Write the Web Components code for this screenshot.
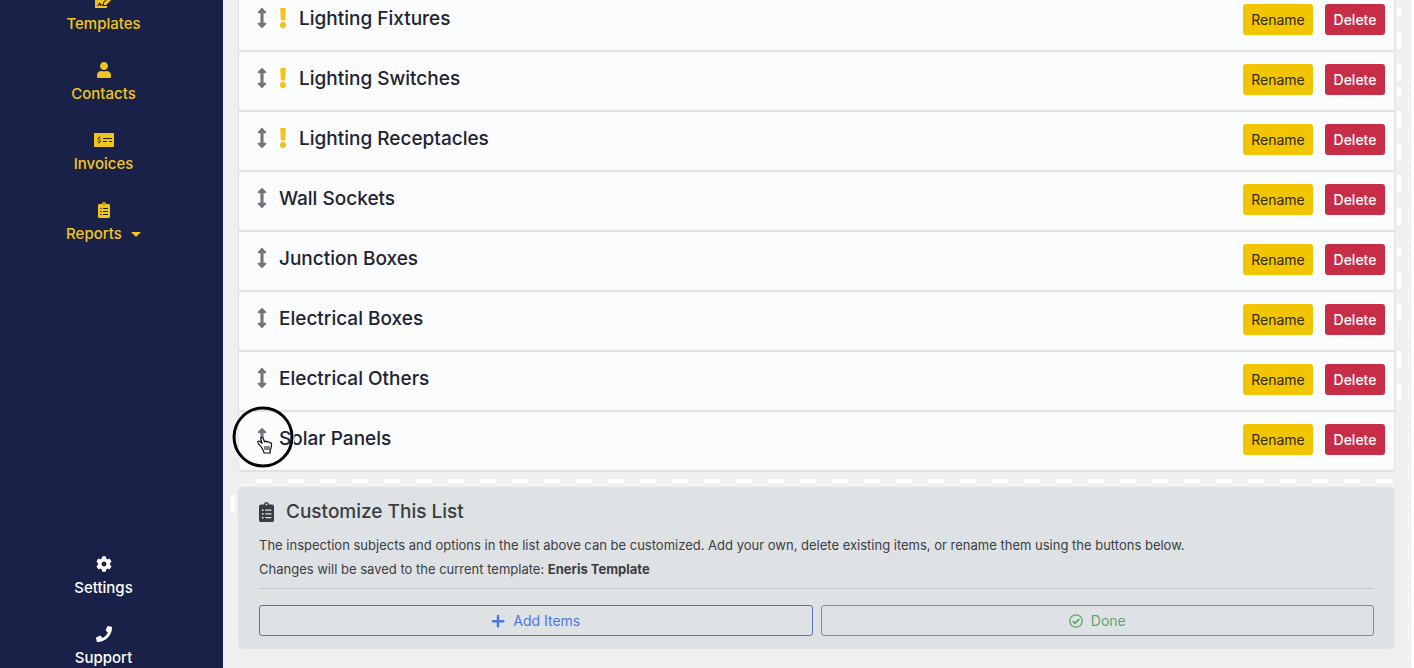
<!DOCTYPE html>
<html lang="en">
<head>
<meta charset="utf-8">
<title>Template items</title>
<style>
  html, body { margin: 0; height: 100%; overflow: hidden; }
  body { font-family: Inter, "Liberation Sans", sans-serif; background: #efefef; color: #212330; }
</style>
</head>
<body>
<app-shell></app-shell>
<script>
const path = (box, d) => `<svg viewBox="0 0 ${box} 512" fill="currentColor" aria-hidden="true"><path d="${d}"/></svg>`;
const ICONS = {
  sign: path(576, 'M218.17 424.14c-2.95-5.92-8.09-6.52-10.17-6.52s-7.22.59-10.02 6.19l-7.67 15.34c-6.37 12.78-25.03 11.37-29.48-2.09L144 386.59l-10.61 31.88c-5.89 17.66-22.38 29.53-41 29.53H80c-8.84 0-16-7.16-16-16s7.16-16 16-16h12.39c4.83 0 9.11-3.08 10.64-7.66l18.19-54.64c3.3-9.81 12.44-16.41 22.78-16.41s19.48 6.59 22.77 16.41l13.88 41.64c19.75-16.19 54.06-9.7 66 14.16 1.89 3.78 5.49 5.95 9.36 6.26v-82.12l128-127.09V160H248c-13.2 0-24-10.8-24-24V0H24C10.7 0 0 10.7 0 24v464c0 13.3 10.7 24 24 24h336c13.3 0 24-10.7 24-24v-40l-128-.11c-16.12-.31-30.58-9.28-37.83-23.75zM384 121.9c0-6.3-2.5-12.4-7-16.9L279.1 7c-4.5-4.5-10.6-7-17-7H256v128h128v-6.1zm-96 225.06V416h68.99l161.68-162.78-67.88-67.88L288 346.96zm280.54-179.63l-31.87-31.87c-9.94-9.94-26.07-9.94-36.01 0l-27.25 27.25 67.88 67.88 27.25-27.25c9.95-9.94 9.95-26.07 0-36.01z'),
  user: path(448, 'M224 256c70.7 0 128-57.3 128-128S294.7 0 224 0 96 57.3 96 128s57.3 128 128 128zm89.6 32h-16.7c-22.2 10.2-46.9 16-72.9 16s-50.6-5.8-72.9-16h-16.7C60.2 288 0 348.2 0 422.4V464c0 26.5 21.5 48 48 48h352c26.5 0 48-21.5 48-48v-41.6c0-74.2-60.2-134.4-134.4-134.4z'),
  check: `<svg viewBox="0 0 20 16" aria-hidden="true"><rect y="1" width="20" height="14" rx="1" fill="currentColor"/><g fill="none" stroke="#192148" stroke-width="1"><path d="M9 6.5h9M9 9.5h4M15 9.5h3"/><path d="M6.5 6.3C6 5.5 3.8 5.5 3.8 6.8S6.6 7.9 6.6 9.2 4 10.4 3.5 9.5M5.2 4.5v1M5.2 10.5v1" stroke-width=".9"/></g></svg>`,
  list: path(384, 'M336 64h-80c0-35.3-28.7-64-64-64s-64 28.7-64 64H48C21.5 64 0 85.5 0 112v352c0 26.5 21.5 48 48 48h288c26.5 0 48-21.5 48-48V112c0-26.5-21.5-48-48-48zM96 424c-13.3 0-24-10.7-24-24s10.7-24 24-24 24 10.7 24 24-10.7 24-24 24zm0-96c-13.3 0-24-10.7-24-24s10.7-24 24-24 24 10.7 24 24-10.7 24-24 24zm0-96c-13.3 0-24-10.7-24-24s10.7-24 24-24 24 10.7 24 24-10.7 24-24 24zm96-192c13.3 0 24 10.7 24 24s-10.7 24-24 24-24-10.7-24-24 10.7-24 24-24zm128 368c0 4.4-3.6 8-8 8H168c-4.4 0-8-3.6-8-8v-16c0-4.4 3.6-8 8-8h144c4.4 0 8 3.6 8 8v16zm0-96c0 4.4-3.6 8-8 8H168c-4.4 0-8-3.6-8-8v-16c0-4.4 3.6-8 8-8h144c4.4 0 8 3.6 8 8v16zm0-96c0 4.4-3.6 8-8 8H168c-4.4 0-8-3.6-8-8v-16c0-4.4 3.6-8 8-8h144c4.4 0 8 3.6 8 8v16z'),
  cog: path(512, 'M487.4 315.7l-42.6-24.6c4.3-23.2 4.3-47 0-70.2l42.6-24.6c4.9-2.8 7.1-8.6 5.5-14-11.1-35.6-30-67.8-54.7-94.6-3.8-4.1-10-5.1-14.8-2.3L380.8 110c-17.9-15.4-38.5-27.3-60.8-35.1V25.8c0-5.6-3.9-10.5-9.4-11.7-36.7-8.2-74.3-7.8-109.2 0-5.5 1.2-9.4 6.1-9.4 11.7V75c-22.2 7.9-42.8 19.8-60.8 35.1L88.7 85.5c-4.9-2.8-11-1.9-14.8 2.3-24.7 26.7-43.6 58.9-54.7 94.6-1.7 5.4.6 11.2 5.5 14L67.3 221c-4.3 23.2-4.3 47 0 70.2l-42.6 24.6c-4.9 2.8-7.1 8.6-5.5 14 11.1 35.6 30 67.8 54.7 94.6 3.8 4.1 10 5.1 14.8 2.3l42.6-24.6c17.9 15.4 38.5 27.3 60.8 35.1v49.2c0 5.6 3.9 10.5 9.4 11.7 36.7 8.2 74.3 7.8 109.2 0 5.5-1.2 9.4-6.1 9.4-11.7v-49.2c22.2-7.9 42.8-19.8 60.8-35.1l42.6 24.6c4.9 2.8 11 1.9 14.8-2.3 24.7-26.7 43.6-58.9 54.7-94.6 1.5-5.5-.7-11.3-5.6-14.1zM256 336c-44.1 0-80-35.9-80-80s35.9-80 80-80 80 35.9 80 80-35.9 80-80 80z'),
  phone: path(512, 'M493.4 24.6l-104-24c-11.3-2.6-22.9 3.3-27.5 13.9l-48 112c-4.2 9.8-1.4 21.3 6.9 28l60.6 49.6c-36 76.7-98.9 140.5-177.2 177.2l-49.6-60.6c-6.8-8.3-18.2-11.1-28-6.9l-112 48C3.9 366.5-2 378.1.6 389.4l24 104C27.1 504.2 36.7 512 48 512c256.1 0 464-207.5 464-464 0-11.2-7.7-20.9-18.6-23.4z'),
  move: path(256, 'M214.059 377.941H168V134.059h46.059c21.382 0 32.09-25.851 16.971-40.971L144.97 7.029c-9.373-9.373-24.568-9.373-33.941 0L24.971 93.088c-15.119 15.119-4.411 40.971 16.971 40.971H88v243.882H41.941c-21.382 0-32.09 25.851-16.971 40.971l86.059 86.059c9.373 9.373 24.568 9.373 33.941 0l86.059-86.059c15.12-15.119 4.412-40.971-16.97-40.971z'),
  alert: path(192, 'M176 432c0 44.112-35.888 80-80 80s-80-35.888-80-80 35.888-80 80-80 80 35.888 80 80zM25.26 25.199l13.6 272C39.499 309.972 50.041 320 62.83 320h66.34c12.789 0 23.331-10.028 23.97-22.801l13.6-272C167.425 11.49 156.496 0 142.77 0H49.23C35.504 0 24.575 11.49 25.26 25.199z'),
  plus: `<svg viewBox="0 0 14 14" fill="none" stroke="currentColor" stroke-width="2.4" stroke-linecap="round" aria-hidden="true"><path d="M7 2v10.4M2 7.200h10.4"/></svg>`,
  done: `<svg viewBox="0 0 14 14" fill="none" stroke="currentColor" stroke-width="1.3" aria-hidden="true"><circle cx="7" cy="7" r="6.2"/><path d="M3.8 7.2l2.2 2.2 4.3-4.3" stroke-width="1.7"/></svg>`,
};

const define = (name, render) => customElements.define(name, class extends HTMLElement {
  connectedCallback() {
    if (!this.shadowRoot) this.attachShadow({ mode: 'open' }).innerHTML = render(this);
  }
});

define('ui-icon', el => `<style>
  :host { display: inline-flex; flex: none; width: 16px; height: 16px; }
  svg { display: block; width: 100%; height: 100%; }
</style>${ICONS[el.getAttribute('name')]}`);

define('nav-item', el => `<style>
  :host { display: block; }
  a { display: flex; flex-direction: column; align-items: center; gap: 4px; padding: 12px 16px 14px 0;
      color: inherit; text-decoration: none; font-size: 15px; line-height: 24px; font-weight: 500; }
  ui-icon { width: 20px; }
  .text { display: flex; align-items: center; gap: 9px; }
  .caret { border: 5px solid transparent; border-top-color: currentColor; border-bottom: 0; }
</style>
<a href="#"><ui-icon name="${el.getAttribute('icon')}"></ui-icon><span class="text"><slot></slot>${el.hasAttribute('menu') ? '<i class="caret"></i>' : ''}</span></a>`);

define('side-bar', () => `<style>
  :host { display: flex; flex-direction: column; justify-content: space-between; overflow: hidden;
          background: #192148; color: #f1c61c; }
  nav.main { margin-top: -20px; }
  nav.foot { margin-bottom: -16px; color: #fff; }
</style>
<nav class="main" aria-label="Main">
  <nav-item icon="sign">Templates</nav-item>
  <nav-item icon="user">Contacts</nav-item>
  <nav-item icon="check">Invoices</nav-item>
  <nav-item icon="list" menu>Reports</nav-item>
</nav>
<nav class="foot" aria-label="Help">
  <nav-item icon="cog">Settings</nav-item>
  <nav-item icon="phone">Support</nav-item>
</nav>`);

define('solid-button', () => `<style>
  :host { display: block; width: 70px; }
  :host([kind=danger]) { width: 60px; }
  button { display: block; width: 100%; height: 31px; padding: 0; border: 0; border-radius: 3px; font: inherit;
           font-size: 14px; line-height: 31px; background: #f1c500; color: #33290f; }
  :host([kind=danger]) button { background: #c72d46; color: #fff; font-weight: 500; }
</style><button type="button"><slot></slot></button>`);

define('pointer-ring', () => `<style>
  :host { position: absolute; left: 50%; top: 50%; width: 64px; height: 64px; margin: -33px 0 0 -31px; pointer-events: none; }
  svg { display: block; }
</style>
<svg width="64" height="64" viewBox="0 0 64 64" fill="none" aria-hidden="true">
  <circle cx="32" cy="32" r="30" stroke="#fff" stroke-width="3"/>
  <circle cx="32" cy="32" r="29" stroke="#050505" stroke-width="3"/>
  <path d="M31 43l-4-5c-1-1.5.6-2.6 2-1.5l2 1.8-1-4c-.7-2.2 1.6-2.8 2.3-.7l1.2 3.4c.5-1.2 2.2-1 2.5.2.8-.9 2.2-.5 2.4.5 1-.5 2.2.2 2.2 1.5 0 3-.5 4.8-1.6 6.5l.2 2.3h-6z" fill="#fff" stroke="#111" stroke-width="1.2" stroke-linejoin="round"/>
  <path d="M34 41v4M36 41v4M38 41v4" stroke="#111"/>
</svg>`);

define('item-row', el => `<style>
  :host { display: flex; align-items: flex-start; box-sizing: border-box; height: 60px; padding: 12px 9px 0 18px;
          border: 1px solid #dfe2e5; border-width: 0 1px 2px; background: #fbfcfe; }
  :host(:last-of-type) { border-radius: 0 0 4px 4px; }
  .lead { display: flex; align-items: center; flex: 1; gap: 12px; height: 30px; }
  .handle { position: relative; display: flex; margin-bottom: 2px; color: #71757a; }
  .handle ui-icon { width: 10px; height: 20px; }
  .alert { width: 8px; height: 20px; margin-bottom: 2px; color: #f1c31c; }
  h5 { margin: 0; font-size: 19px; line-height: 30px; font-weight: 500; }
  .actions { display: flex; gap: 12px; }
</style>
<div class="lead">
  <span class="handle"><ui-icon name="move"></ui-icon>${el.hasAttribute('held') ? '<pointer-ring></pointer-ring>' : ''}</span>
  ${el.hasAttribute('flagged') ? '<ui-icon class="alert" name="alert"></ui-icon>' : ''}
  <h5><slot></slot></h5>
</div>
<div class="actions"><solid-button>Rename</solid-button><solid-button kind="danger">Delete</solid-button></div>`);

define('dash-strip', () => `<style>
  :host { display: block; height: 15px; }
  svg { display: block; overflow: visible; }
</style>
<svg width="100%" height="15" aria-hidden="true">
  <defs>
    <pattern id="wide" x="17" width="32" height="15" patternUnits="userSpaceOnUse"><rect y="7" width="18" height="4" fill="#fcfdfe"/></pattern>
    <pattern id="thin" x="2" width="32" height="15" patternUnits="userSpaceOnUse"><rect y="12" width="16" height="1" fill="#fcfdfe"/></pattern>
  </defs>
  <rect x="17" width="100%" height="15" fill="url(#wide)" style="clip-path: inset(0 17px 0 0)"/>
  <rect width="100%" height="15" fill="url(#thin)"/>
  <rect x="-7" y="23" width="4" height="18" fill="#fcfdfe"/>
</svg>`);

define('dash-gutter', () => {
  const wide = [[7,10],[31,18],[63,18],[87,10],[111,18],[143,18],[175,18],[207,18],[247,10],[271,18],[303,18],[351,18],[383,18]];
  const thin = [[80,4],[88,4],[96,16],[128,16],[160,4],[168,4],[176,16],[208,16],[240,4],[248,4],[256,16],[288,16],[320,20],[344,4],[352,16],[384,16],[416,4],[424,4],[432,16],[464,16],[496,4],[504,4],[512,16],[544,16],[576,4],[584,4],[592,16],[624,16],[656,4]];
  return `<style>
    :host { display: block; width: 16px; border-right: 3px solid #fcfdfe; overflow: hidden; }
    svg { display: block; }
  </style>
  <svg width="16" height="100%" fill="#fcfdfe" aria-hidden="true">
    ${wide.map(([y, h]) => `<rect x="2" y="${y}" width="4" height="${h}"/>`).join('')}
    ${thin.map(([y, h]) => `<rect x="13" y="${y}" width="1" height="${h}"/>`).join('')}
  </svg>`;
});

define('outline-button', el => `<style>
  :host { display: block; flex: 1; }
  button { display: flex; align-items: center; justify-content: center; gap: 8px; width: 100%; height: 31px; padding: 0;
           border: 1px solid #5673b8; border-radius: 3px; background: none; font: inherit; font-size: 14px; line-height: 20px; color: #4b76e0; }
  :host([kind=success]) button { border-color: #63a072; color: #5fa56b; }
  ui-icon { width: 14px; height: 14px; }
</style><button type="button"><ui-icon name="${el.getAttribute('icon')}"></ui-icon><span><slot></slot></span></button>`);

define('customize-panel', () => `<style>
  :host { display: block; padding: 12px 21px 13px; border-radius: 5px; background: #dfe2e5; color: #3a3d40; }
  h5 { display: flex; align-items: center; gap: 12px; margin: 0 0 8px; font-size: 19px; line-height: 26px; font-weight: 500; }
  h5 ui-icon { width: 15px; height: 20px; }
  p { margin: 0; font-size: 13px; line-height: 24px; }
  hr { height: 1px; margin: 7px 0 16px; border: 0; background: #c5c9cd; }
  .actions { display: flex; gap: 8px; }
</style>
<h5><ui-icon name="list"></ui-icon>Customize This List</h5>
<p>The inspection subjects and options in the list above can be customized. Add your own, delete existing items, or rename them using the buttons below.</p>
<p>Changes will be saved to the current template: <b>Eneris Template</b></p>
<hr>
<div class="actions">
  <outline-button icon="plus">Add Items</outline-button>
  <outline-button icon="done" kind="success">Done</outline-button>
</div>`);

define('app-shell', () => `<style>
  :host { display: grid; grid-template-columns: 223px minmax(0, 1fr) auto; height: 100vh; overflow: hidden; }
  main { padding-left: 15px; }
  .rows { margin-top: -8px; }
</style>
<side-bar></side-bar>
<main>
  <div class="rows">
    <item-row flagged>Lighting Fixtures</item-row>
    <item-row flagged>Lighting Switches</item-row>
    <item-row flagged>Lighting Receptacles</item-row>
    <item-row>Wall Sockets</item-row>
    <item-row>Junction Boxes</item-row>
    <item-row>Electrical Boxes</item-row>
    <item-row>Electrical Others</item-row>
    <item-row held>Solar Panels</item-row>
  </div>
  <dash-strip></dash-strip>
  <customize-panel></customize-panel>
</main>
<dash-gutter></dash-gutter>`);
</script>
</body>
</html>
